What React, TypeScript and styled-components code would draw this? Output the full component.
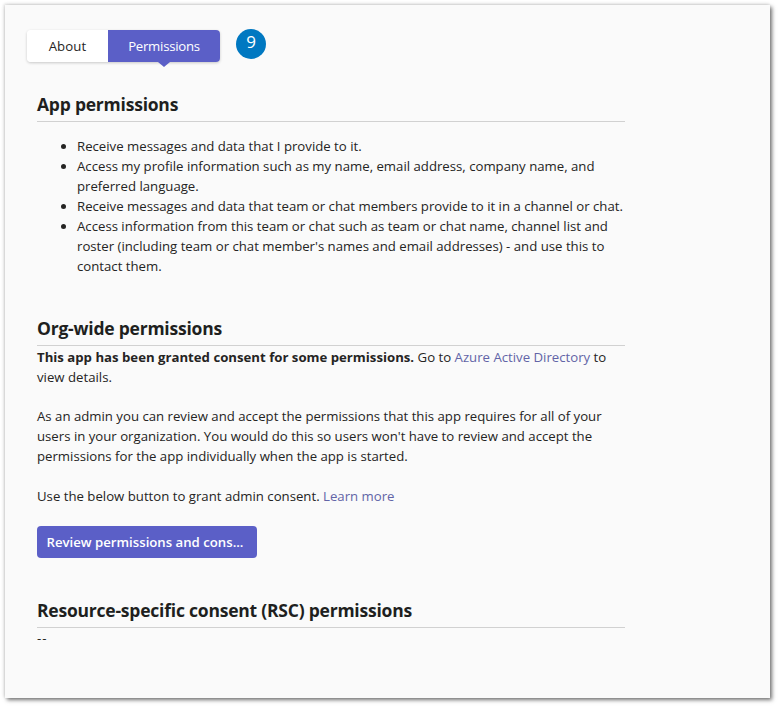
import React from "react";
import styled, { createGlobalStyle } from "styled-components";

const Global = createGlobalStyle`
  html, body { margin: 0; padding: 0; background: #fff; }
  body { width: 779px; height: 707px; overflow: hidden; font-family: "Open Sans", "Noto Sans", sans-serif; color: #252423; }
`;
const Panel = styled.main`
  box-sizing: border-box;
  width: 765px;
  height: 693px;
  margin: 5px 0 0 5px;
  padding: 25px 22px 0;
  background: #fafafa;
  box-shadow: 2px 2px 4px rgba(0, 0, 0, 0.55), -1px -1px 3px rgba(0, 0, 0, 0.15);
`;
const TabBar = styled.div`
  display: flex;
  align-items: flex-start;
`;
const Tabs = styled.div`
  display: flex;
  height: 32px;
  border-radius: 4px;
  box-shadow: 0 1px 3px rgba(0, 0, 0, 0.2);
`;
const Tab = styled.div<{ $active?: boolean }>`
  position: relative;
  display: flex;
  align-items: center;
  justify-content: center;
  width: ${(p) => (p.$active ? "112px" : "81px")};
  font-size: 13.2px;
  letter-spacing: ${(p) => (p.$active ? "-0.25px" : "0.1px")};
  background: ${(p) => (p.$active ? "#5b5fc7" : "#fff")};
  color: ${(p) => (p.$active ? "#fff" : "#252423")};
  border-radius: ${(p) => (p.$active ? "0 4px 4px 0" : "4px 0 0 4px")};
  &::after {
    content: ${(p) => (p.$active ? '""' : "none")};
    position: absolute;
    left: 50%;
    bottom: -5px;
    margin-left: -6px;
    border-left: 6px solid transparent;
    border-right: 6px solid transparent;
    border-top: 5px solid #5b5fc7;
  }
`;
const Callout = styled.div`
  display: flex;
  align-items: center;
  justify-content: center;
  width: 30px;
  height: 30px;
  margin: -1px 0 0 16px;
  border-radius: 50%;
  background: #0078c1;
  color: #fff;
  font-size: 17px;
  line-height: 26px;
  padding-bottom: 4px;
  box-sizing: border-box;
`;
const Content = styled.div`
  width: 588px;
  margin-left: 10px;
  font-size: 13.2px;
  line-height: 20px;
`;
const Heading = styled.h2<{ $top: number }>`
  margin: ${(p) => p.$top}px 0 0;
  padding-bottom: 5px;
  border-bottom: 1px solid #d1d1d1;
  font-size: 17.5px;
  line-height: 24px;
  font-weight: 700;
  letter-spacing: -0.22px;
  color: #201f1e;
`;
const List = styled.ul`
  margin: 14px 0 0;
  padding: 0 0 0 40px;
  white-space: nowrap;
`;
const Para = styled.p<{ $top?: number }>`
  margin: ${(p) => p.$top ?? 1}px 0 0;
  white-space: nowrap;
`;
const Empty = styled.p`
  margin: 0;
  letter-spacing: 1px;
`;
const Link = styled.a`
  color: #6264a7;
`;
const Button = styled.button`
  display: block;
  width: 220px;
  height: 32px;
  margin-top: 20px;
  padding: 0 4px 0 0;
  border: none;
  border-radius: 4px;
  background: #5b5fc7;
  color: #fff;
  font-family: inherit;
  font-size: 13.2px;
  font-weight: 600;
`;

export default function App() {
  return (
    <>
      <Global />
      <Panel>
        <TabBar>
          <Tabs>
            <Tab>About</Tab>
            <Tab $active>Permissions</Tab>
          </Tabs>
          <Callout>9</Callout>
        </TabBar>
        <Content>
          <Heading $top={30}>App permissions</Heading>
          <List>
            <li>Receive messages and data that I provide to it.</li>
            <li>
              Access my profile information such as my name, email address, company name, and
              <br />
              preferred language.
            </li>
            <li>Receive messages and data that team or chat members provide to it in a channel or chat.</li>
            <li>
              Access information from this team or chat such as team or chat name, channel list and
              <br />
              roster (including team or chat member's names and email addresses) - and use this to
              <br />
              contact them.
            </li>
          </List>
          <Heading $top={40}>Org-wide permissions</Heading>
          <Para>
            <strong>This app has been granted consent for some permissions.</strong> Go to{" "}
            <Link>Azure Active Directory</Link> to
            <br />
            view details.
          </Para>
          <Para $top={19}>
            As an admin you can review and accept the permissions that this app requires for all of your
            <br />
            users in your organization. You would do this so users won't have to review and accept the
            <br />
            permissions for the app individually when the app is started.
          </Para>
          <Para $top={20}>
            Use the below button to grant admin consent. <Link>Learn more</Link>
          </Para>
          <Button>Review permissions and cons...</Button>
          <Heading $top={40}>Resource-specific consent (RSC) permissions</Heading>
          <Empty>--</Empty>
        </Content>
      </Panel>
    </>
  );
}
